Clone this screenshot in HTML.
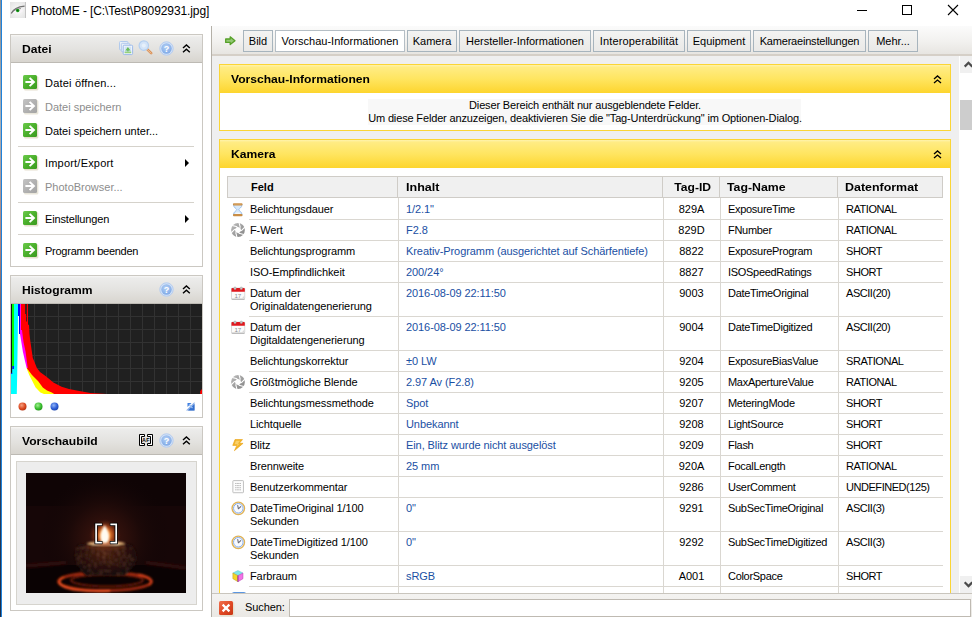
<!DOCTYPE html>
<html lang="de">
<head>
<meta charset="utf-8">
<title>PhotoME - [C:\Test\P8092931.jpg]</title>
<style>
html,body{margin:0;padding:0;}
body{width:972px;height:617px;overflow:hidden;position:relative;background:#fff;font-family:"Liberation Sans",sans-serif;font-size:11px;color:#000;}
*{box-sizing:border-box;}
.abs{position:absolute;}
.t{position:absolute;white-space:nowrap;line-height:13px;}
svg{position:absolute;overflow:visible;}
/* window frame */
#edge0{left:0;top:0;width:1px;height:617px;background:linear-gradient(#8a8f96 0,#a9b0b8 20%,#b08078 40%,#7a6a70 48%,#3a4e6a 60%,#1c2c48 100%);}
#edge1{left:1px;top:0;width:1px;height:617px;background:#1f82da;}
#title{left:31px;top:4px;font-size:12px;line-height:14px;letter-spacing:-0.1px;}
/* sidebar panels */
.sp{position:absolute;left:10px;width:193px;border:1px solid #cbc8c2;background:#fff;}
.sph{position:absolute;left:0;top:0;width:191px;height:28px;background:linear-gradient(#f9f8f6 0,#ececeb 2px,#e3e2df 55%,#d8d5cf 100%);border-bottom:1px solid #bdbab4;}
.sph .t{left:11px;top:7px;font-weight:bold;font-size:11px;line-height:14px;transform:scaleX(1.1);transform-origin:0 50%;}
.mi{position:absolute;left:34px;white-space:nowrap;line-height:13px;}
.mi.dis{color:#8d8d8d;}
.sep{position:absolute;left:7px;width:176px;height:1px;background:#d5d2cb;}
.arr{position:absolute;left:174px;width:0;height:0;border-left:4px solid #000;border-top:4px solid transparent;border-bottom:4px solid transparent;}
.gi{left:12px;}
/* main */
#main{left:211px;top:26px;width:761px;height:591px;background:#efefef;border-left:1px solid #b4b0a8;overflow:hidden;}
#tabbar{left:0;top:0;width:760px;height:30px;background:linear-gradient(#fbfbfb,#f2f1ef 55%,#e7e5e1);border-bottom:2px solid #d5cfc7;}
.tab{position:absolute;top:4px;height:22px;border:1px solid #a7b4bd;background:linear-gradient(#f3f3f2,#eae9e7);font-size:11px;line-height:20px;text-align:center;white-space:nowrap;}
.tab.act{background:#fff;border-color:#b5bec5;}
.yp{position:absolute;left:7px;width:732px;border:1px solid #fbd535;background:#fff;}
.yph{position:absolute;left:0;top:0;width:730px;height:28px;background:linear-gradient(#fff3ac,#ffec84 8%,#ffe560 50%,#fdd52e);}
.yph .t{left:11px;top:7px;font-weight:bold;font-size:11px;line-height:14px;transform:scaleX(1.1);transform-origin:0 50%;}
/* table */
#tbl{left:7px;top:36px;width:717px;height:440px;}
.th{position:absolute;top:0;height:22px;background:#f0f0f0;border:1px solid #cfccc7;border-left:none;font-weight:bold;font-size:11px;line-height:20px;white-space:nowrap;padding-left:7px;}
.th span{display:inline-block;transform:scaleX(1.1);transform-origin:0 50%;}
.row{position:absolute;left:0;width:716px;}
.ic{position:absolute;}
.r1 .c{padding-top:5px;}
.r1 .ic{margin-top:1px;}
.c{position:absolute;top:0;height:100%;border-bottom:1px solid #dad7d1;line-height:13px;padding-top:4px;white-space:nowrap;}
.c1{left:22px;width:149px;padding-left:1px;letter-spacing:-0.1px;}
.c2{left:171px;width:265px;border-left:1px solid #dad7d1;padding-left:7px;color:#1a4fa3;letter-spacing:-0.08px;}
.c3{left:436px;width:57px;border-left:1px solid #dad7d1;text-align:center;padding-right:1px;}
.c4{left:493px;width:118px;border-left:1px solid #dad7d1;padding-left:7px;letter-spacing:-0.3px;}
.c5{left:611px;width:105px;border-left:1px solid #dad7d1;padding-left:7px;letter-spacing:-0.45px;}
#vs{left:747px;top:30px;width:14px;height:537px;background:#fff;}
#bottom{left:0;top:567px;width:760px;height:24px;background:linear-gradient(#f4f3f1,#eae8e4);border-top:1px solid #c9c5bd;}
</style>
</head>
<body>
<div class="abs" id="edge0"></div><div class="abs" id="edge1"></div>
<svg style="left:10px;top:2px" width="16" height="16" viewBox="0 0 16 16"><defs><radialGradient id="gEye" cx=".5" cy=".5" r=".75"><stop offset="0" stop-color="#fbfbfb"/><stop offset="1" stop-color="#e0e0e0"/></radialGradient></defs><rect width="16" height="16" fill="url(#gEye)"/><rect x="15" width="1" height="16" fill="#c4c4c4"/><path d="M2.6 11 C5 8.4 9 7 13.4 8.4 C11 12 6 12.6 2.600 11Z" fill="#f8f4f8"/><path d="M1.200 11.6 C3 7.5 7.500 4.800 14.600 4.200" stroke="#4a4a4a" stroke-width="1.200" fill="none" opacity=".75"/><path d="M2 10.600 C4 8 7 6.600 11 6.600" stroke="#6a6a6a" stroke-width="1" fill="none" opacity=".7"/><circle cx="7.700" cy="8.500" r="1.750" fill="#169c18"/><circle cx="7.700" cy="8.400" r=".700" fill="#0a5c0c"/></svg>
<div class="t" id="title">PhotoME - [C:\Test\P8092931.jpg]</div>
<svg style="left:850px;top:0" width="122" height="22" viewBox="0 0 122 22"><path d="M7 10.500 H17" stroke="#000" stroke-width="1"/><rect x="52.5" y="5.500" width="9" height="9" fill="none" stroke="#000" stroke-width="1"/><path d="M98 5 L108 15 M108 5 L98 15" stroke="#000" stroke-width="1.100"/></svg>

<!-- SIDEBAR -->
<svg width="0" height="0" style="left:0;top:0"><defs>
<linearGradient id="gGreen" x1="0" y1="0" x2="1" y2="1"><stop offset="0" stop-color="#6ccb4c"/><stop offset=".5" stop-color="#4bb02c"/><stop offset="1" stop-color="#3c9a20"/></linearGradient>
<linearGradient id="gGray" x1="0" y1="0" x2="1" y2="1"><stop offset="0" stop-color="#c4c4c4"/><stop offset=".5" stop-color="#b2b2b2"/><stop offset="1" stop-color="#a4a4a4"/></linearGradient>
<radialGradient id="gHelp" cx=".45" cy=".35" r=".7"><stop offset="0" stop-color="#b4cff4"/><stop offset="1" stop-color="#7da8e6"/></radialGradient>
<radialGradient id="gR" cx=".4" cy=".35" r=".7"><stop offset="0" stop-color="#f6a080"/><stop offset=".6" stop-color="#dc4a22"/><stop offset="1" stop-color="#b03010"/></radialGradient>
<radialGradient id="gG" cx=".4" cy=".35" r=".7"><stop offset="0" stop-color="#a0ee90"/><stop offset=".6" stop-color="#3cc030"/><stop offset="1" stop-color="#209018"/></radialGradient>
<radialGradient id="gB" cx=".4" cy=".35" r=".7"><stop offset="0" stop-color="#90b4f6"/><stop offset=".6" stop-color="#3060d8"/><stop offset="1" stop-color="#1840a8"/></radialGradient>
</defs></svg>
<div class="sp" id="p1" style="top:34px;height:233px;">
  <div class="sph"><div class="t">Datei</div>
    <!-- pictures -->
    <svg style="left:108px;top:6px;opacity:.9" width="15" height="15" viewBox="0 0 16 16"><rect x="0.5" y="0.5" width="9" height="9" rx="1" fill="#eaf1fb" stroke="#a8c4ee"/><rect x="2.5" y="2.5" width="9" height="9" rx="1" fill="#eaf1fb" stroke="#a8c4ee"/><rect x="4.5" y="4.5" width="10" height="10" rx="1" fill="#f4f8fe" stroke="#8fb2ea"/><rect x="6" y="6" width="7" height="7" fill="#cfe4f8"/><path d="M9.5 6.3 L12.3 10 H10.2 V11.3 H8.8 V10 H6.7Z" fill="#5cb84a"/><rect x="6" y="11.3" width="7" height="1.7" fill="#8fd070"/></svg>
    <!-- magnifier -->
    <svg style="left:127px;top:5px" width="16" height="16" viewBox="0 0 16 16"><path d="M8.8 8.8 L13.2 13.2" stroke="#d9935a" stroke-width="2.6" stroke-linecap="round"/><path d="M9.2 9.4 L12.9 13.1" stroke="#f0c09a" stroke-width="1" stroke-linecap="round"/><circle cx="5.8" cy="5.6" r="4.7" fill="#d3e4f8" stroke="#b4cff0" stroke-width="1.2"/><circle cx="5.8" cy="5.6" r="2" fill="#e6f0fb"/></svg>
    <!-- help -->
    <svg style="left:147.600px;top:5.600px" width="16" height="16" viewBox="0 0 16 16"><circle cx="7.500" cy="7.500" r="6.700" fill="#d3e2f7" stroke="#b4ccf0" stroke-width="1"/><circle cx="7.500" cy="7.500" r="5.200" fill="url(#gHelp)"/><text x="7.600" y="10.800" text-anchor="middle" font-family="Liberation Sans, sans-serif" font-weight="bold" font-size="9" fill="#fff">?</text></svg>
    <!-- chevrons -->
    <svg style="left:171.300px;top:9px" width="9" height="10" viewBox="0 0 9 10"><path d="M1 4 L4.400 1 L7.800 4 M1 8.200 L4.400 5.200 L7.800 8.200" fill="none" stroke="#000" stroke-width="1.400"/></svg>
  </div>
  <svg class="gi" style="top:40px" width="16" height="16"><rect x="1" y="1" width="14.4" height="14.4" rx="1.5" fill="#e6e0cf"/><rect width="14" height="14" rx="1.5" fill="url(#gGreen)"/><path d="M2.4 7 H10.6 M6.6 2.9 L10.9 7 L6.6 11.1" stroke="#fff" stroke-width="2" fill="none"/></svg>
  <div class="mi" style="top:42px;letter-spacing:0.2px">Datei öffnen...</div>
  <svg class="gi" style="top:64px" width="16" height="16"><rect x="1" y="1" width="14.4" height="14.4" rx="1.5" fill="#e9e6da"/><rect width="14" height="14" rx="1.5" fill="url(#gGray)"/><path d="M2.4 7 H10.6 M6.6 2.9 L10.9 7 L6.6 11.1" stroke="#fff" stroke-width="2" fill="none"/></svg>
  <div class="mi dis" style="top:66px">Datei speichern</div>
  <svg class="gi" style="top:88px" width="16" height="16"><rect x="1" y="1" width="14.4" height="14.4" rx="1.5" fill="#e6e0cf"/><rect width="14" height="14" rx="1.5" fill="url(#gGreen)"/><path d="M2.4 7 H10.6 M6.6 2.9 L10.9 7 L6.6 11.1" stroke="#fff" stroke-width="2" fill="none"/></svg>
  <div class="mi" style="top:90px">Datei speichern unter...</div>
  <div class="sep" style="top:111px"></div>
  <svg class="gi" style="top:120px" width="16" height="16"><rect x="1" y="1" width="14.4" height="14.4" rx="1.5" fill="#e6e0cf"/><rect width="14" height="14" rx="1.5" fill="url(#gGreen)"/><path d="M2.4 7 H10.6 M6.6 2.9 L10.9 7 L6.6 11.1" stroke="#fff" stroke-width="2" fill="none"/></svg>
  <div class="mi" style="top:122px;letter-spacing:0.2px">Import/Export</div><div class="arr" style="top:124px"></div>
  <svg class="gi" style="top:144px" width="16" height="16"><rect x="1" y="1" width="14.4" height="14.4" rx="1.5" fill="#e9e6da"/><rect width="14" height="14" rx="1.5" fill="url(#gGray)"/><path d="M2.4 7 H10.6 M6.6 2.9 L10.9 7 L6.6 11.1" stroke="#fff" stroke-width="2" fill="none"/></svg>
  <div class="mi dis" style="top:146px">PhotoBrowser...</div>
  <div class="sep" style="top:167px"></div>
  <svg class="gi" style="top:176px" width="16" height="16"><rect x="1" y="1" width="14.4" height="14.4" rx="1.5" fill="#e6e0cf"/><rect width="14" height="14" rx="1.5" fill="url(#gGreen)"/><path d="M2.4 7 H10.6 M6.6 2.9 L10.9 7 L6.6 11.1" stroke="#fff" stroke-width="2" fill="none"/></svg>
  <div class="mi" style="top:178px;letter-spacing:-0.15px">Einstellungen</div><div class="arr" style="top:180px"></div>
  <div class="sep" style="top:199px"></div>
  <svg class="gi" style="top:208px" width="16" height="16"><rect x="1" y="1" width="14.4" height="14.4" rx="1.5" fill="#e6e0cf"/><rect width="14" height="14" rx="1.5" fill="url(#gGreen)"/><path d="M2.4 7 H10.6 M6.6 2.9 L10.9 7 L6.6 11.1" stroke="#fff" stroke-width="2" fill="none"/></svg>
  <div class="mi" style="top:210px;letter-spacing:-0.25px">Programm beenden</div>
</div>
<div class="sp" id="p2" style="top:275px;height:143px;">
  <div class="sph"><div class="t">Histogramm</div>
    <svg style="left:147.600px;top:5.600px" width="16" height="16" viewBox="0 0 16 16"><circle cx="7.500" cy="7.500" r="6.700" fill="#d3e2f7" stroke="#b4ccf0" stroke-width="1"/><circle cx="7.500" cy="7.500" r="5.200" fill="url(#gHelp)"/><text x="7.600" y="10.800" text-anchor="middle" font-family="Liberation Sans, sans-serif" font-weight="bold" font-size="9" fill="#fff">?</text></svg>
    <svg style="left:171.300px;top:9px" width="9" height="10" viewBox="0 0 9 10"><path d="M1 4 L4.400 1 L7.800 4 M1 8.200 L4.400 5.200 L7.800 8.200" fill="none" stroke="#000" stroke-width="1.400"/></svg>
  </div>
  <svg style="left:0;top:28px" width="191" height="90" viewBox="0 0 191 90">
    <rect width="191" height="90" fill="#202020"/>
    <g stroke="#323232" stroke-width="1">
      <path d="M23.500 0V90M35.500 0V90M47.500 0V90M59.500 0V90M71.500 0V90M83.500 0V90M95.500 0V90M107.500 0V90M119.500 0V90M131.500 0V90M143.500 0V90M155.500 0V90M167.500 0V90M179.500 0V90"/>
      <path d="M0 12.500H191M0 25.500H191M0 38.500H191M0 51.500H191M0 64.500H191M0 77.500H191"/>
    </g>
    <!-- red -->
    <path d="M9 0 H14.200 V10 H15 V17.500 H15.800 V0 H17 V20.700 H18 L18.500 30 L19.300 37 L21.800 54 L23.500 58 L25.900 64 L29 68 L35.200 72.400 L42.400 78.600 L50.600 82.700 L58 85 L67 86.800 L79.400 88.900 L96 90 H9Z" fill="#ff0000"/>
    <path d="M189.200 90 V87.500 L190.300 85.500 H191 V90Z" fill="#ff0000"/>
    <!-- yellow -->
    <path d="M15 63 L16.500 65 L21 71 L27 77 L31.800 83.500 L36 86.500 L40.800 88.400 L43.200 90 H15Z" fill="#ffff00"/>
    <!-- magenta -->
    <path d="M8.800 0 H10 V26 H11 L12.500 38 L14.600 47.700 L16.700 64 H9Z" fill="#ff00ff"/>
    <!-- black/green/cyan/blue -->
    <rect x="0" y="0" width="1" height="68" fill="#101010"/>
    <rect x="1" y="0" width="2.200" height="90" fill="#00ff00"/>
    <path d="M0 69 H1.300 V62 H3 V90 H0Z" fill="#0020ff"/>
    <path d="M3 0 H7.200 V90 H0 V70 H1.300 V65 H3Z" fill="#00ffff"/>
    <rect x="7" y="0" width="2" height="31" fill="#0000ff"/>
    <!-- white -->
    <path d="M5.800 90 L6.200 70 L6.800 30 L7 12 H8 V30 H9 L10 36 L11.900 47.700 L14 57 L16.100 65.700 L18.500 71.500 L21.300 77 L24.600 83.500 L29.400 88.400 L33 90Z" fill="#ffffff"/>
  </svg>
  <svg style="left:6.600px;top:125.600px" width="50" height="10" viewBox="0 0 50 10"><circle cx="4.5" cy="4.5" r="4" fill="url(#gR)"/><circle cx="20.5" cy="4.5" r="4" fill="url(#gG)"/><circle cx="36.5" cy="4.5" r="4" fill="url(#gB)"/></svg>
  <svg style="left:174.500px;top:125.500px" width="9" height="9" viewBox="0 0 9 9"><path d="M0 8.5 H8.5 V2 L2 8.5Z" fill="#2a62c0"/><path d="M0 8.5 L8.5 0 V8.5Z" fill="#3a78d8" opacity=".6"/><path d="M1.5 1 H5.5 L1.5 5Z" fill="#3f7fe0"/><path d="M3 2.5 L6.5 6" stroke="#9cc0f4" stroke-width="1.2"/></svg>
</div>

<div class="sp" id="p3" style="top:426px;height:185px;">
  <div class="sph"><div class="t">Vorschaubild</div>
    <svg style="left:128px;top:7px" width="14" height="12" viewBox="0 0 14 12"><path d="M0.500 0.500 H5.500 V2.500 H2.500 V9.500 H5.500 V11.500 H0.500Z M13.500 0.500 H8.500 V2.500 H11.500 V9.500 H8.500 V11.500 H13.500Z" fill="#fff" stroke="#000" stroke-width="1"/><text x="7" y="8" text-anchor="middle" font-family="Liberation Sans, sans-serif" font-weight="bold" font-size="5.400" letter-spacing="0.300" fill="#000">AF</text></svg>
    <svg style="left:147.600px;top:5.600px" width="16" height="16" viewBox="0 0 16 16"><circle cx="7.500" cy="7.500" r="6.700" fill="#d3e2f7" stroke="#b4ccf0" stroke-width="1"/><circle cx="7.500" cy="7.500" r="5.200" fill="url(#gHelp)"/><text x="7.600" y="10.800" text-anchor="middle" font-family="Liberation Sans, sans-serif" font-weight="bold" font-size="9" fill="#fff">?</text></svg>
    <svg style="left:171.300px;top:9px" width="9" height="10" viewBox="0 0 9 10"><path d="M1 4 L4.400 1 L7.800 4 M1 8.200 L4.400 5.200 L7.800 8.200" fill="none" stroke="#000" stroke-width="1.400"/></svg>
  </div>
  <div class="abs" style="left:5px;top:34px;width:181px;height:144px;background:#ededed;border:1px solid #d6d4ce;"></div>
  <svg style="left:15px;top:46px;overflow:hidden" width="160" height="120" viewBox="0 0 160 120">
    <defs>
      <radialGradient id="pvGlow" cx="79" cy="66" r="66" gradientUnits="userSpaceOnUse"><stop offset="0" stop-color="#4e1e10"/><stop offset=".22" stop-color="#32110c"/><stop offset=".55" stop-color="#1c0908"/><stop offset="1" stop-color="#100506" stop-opacity="0"/></radialGradient>
      <radialGradient id="pvFlame" cx="79" cy="62" r="16" gradientUnits="userSpaceOnUse"><stop offset="0" stop-color="#ffe2b0"/><stop offset=".28" stop-color="#f08a34"/><stop offset=".55" stop-color="#b04818" stop-opacity=".8"/><stop offset="1" stop-color="#4a180c" stop-opacity="0"/></radialGradient>
      <radialGradient id="pvBody" cx="79" cy="80" r="36" gradientUnits="userSpaceOnUse" gradientTransform="translate(0 32) scale(1 .6)"><stop offset="0" stop-color="#4a2012"/><stop offset=".5" stop-color="#2e130c"/><stop offset="1" stop-color="#160807"/></radialGradient>
      <filter id="pvBlur" x="-20%" y="-20%" width="140%" height="140%"><feGaussianBlur stdDeviation="1.5"/></filter>
      <filter id="pvBlur2" x="-20%" y="-20%" width="140%" height="140%"><feGaussianBlur stdDeviation="0.8"/></filter>
      <filter id="pvTex" x="0" y="0" width="100%" height="100%"><feTurbulence type="fractalNoise" baseFrequency="0.35" numOctaves="2" seed="7" result="n"/><feColorMatrix in="n" type="matrix" values="0 0 0 0 0.36  0 0 0 0 0.15  0 0 0 0 0.09  0 0 0 1.8 -0.95"/><feComposite in2="SourceGraphic" operator="in"/><feGaussianBlur stdDeviation="0.5"/></filter>
    </defs>
    <rect width="160" height="120" fill="#0f0405"/>
    <rect y="33" width="160" height="60" fill="#160607"/>
    <rect width="160" height="120" fill="url(#pvGlow)"/>
    <path d="M0 97 L36 92 H122 L160 98 V120 H0Z" fill="#0a0203"/>
    <path d="M0 93 L40 89.500 M120 89.500 L160 95" stroke="#34100d" stroke-width="3" filter="url(#pvBlur)"/>
    <!-- reflection rings -->
    <g filter="url(#pvBlur2)" fill="none">
      <ellipse cx="79" cy="108.500" rx="46.500" ry="9" stroke="#a42a0e" stroke-width="2.800"/>
      <ellipse cx="81" cy="107.300" rx="36" ry="6" stroke="#7a1f0b" stroke-width="1.800"/>
      <path d="M33 109 C35 117 60 119 84 118" stroke="#ff5a28" stroke-width="1.800"/>
      <path d="M38 104 C34 106 33 108 34 110" stroke="#e2481c" stroke-width="2"/>
      <path d="M112 101.500 C124 103.500 128 108 123 112" stroke="#d8421a" stroke-width="2"/>
    </g>
    <!-- holder -->
    <g filter="url(#pvBlur2)">
      <path d="M52 72 C49 78 47.500 82 49.500 88 C51.500 94 56 99 60 103 H98 C104 99 108.500 93 110.500 87 C111.500 81 109 76 106 72 C98 68.500 60 68.500 52 72Z" fill="url(#pvBody)"/>
      <path d="M52 72 C49 78 47.500 82 49.500 88 C51.500 94 56 99 60 103 H98 C104 99 108.500 93 110.500 87 C111.500 81 109 76 106 72 C98 68.500 60 68.500 52 72Z" fill="#fff" filter="url(#pvTex)"/>
      <path d="M60 73.500 C70 76.500 88 76.500 98 73.500" stroke="#6a3018" stroke-width="1.600" fill="none"/>
      <ellipse cx="80" cy="70.300" rx="18.500" ry="2" fill="#f8c080"/>
      <ellipse cx="80" cy="70.200" rx="13" ry="1.400" fill="#fff6e2"/>
    </g>
    <circle cx="79" cy="62" r="16" fill="url(#pvFlame)"/>
    <path d="M78.500 52 C82 57 84 62 82.600 67.500 C81.500 71 76 71 75 67.500 C73.500 62 75.500 57 78.500 52Z" fill="#fffaf0" filter="url(#pvBlur2)"/>
    <!-- AF brackets -->
    <path d="M76.500 51.300 H70.100 V69.700 H76.500 M83.800 51.300 H90.200 V69.700 H83.800" fill="none" stroke="#000" stroke-width="3.200"/>
    <path d="M75.900 51.300 H70.100 V69.700 H75.900 M84.400 51.300 H90.200 V69.700 H84.400" fill="none" stroke="#fff" stroke-width="1.700"/>
  </svg>
</div>


<!-- MAIN -->
<div class="abs" id="main">
  <div class="abs" id="tabbar">
    <svg style="left:13px;top:10px" width="11" height="10" viewBox="0 0 11 10"><path d="M0.700 3 H5.200 V0.800 L10 4.700 L5.200 8.600 V6.400 H0.700Z" fill="#93c873" stroke="#56a028" stroke-width="1.300" stroke-linejoin="round"/></svg>
    <div class="tab" style="left:31px;width:30px">Bild</div>
    <div class="tab act" style="left:63px;width:130px">Vorschau-Informationen</div>
    <div class="tab" style="left:195px;width:50px">Kamera</div>
    <div class="tab" style="left:247px;width:132px">Hersteller-Informationen</div>
    <div class="tab" style="left:381px;width:92px;letter-spacing:0.15px">Interoperabilität</div>
    <div class="tab" style="left:475px;width:64px">Equipment</div>
    <div class="tab" style="left:541px;width:113px;letter-spacing:-0.2px">Kameraeinstellungen</div>
    <div class="tab" style="left:656px;width:50px">Mehr...</div>
  </div>
  <div class="yp" style="top:38px;height:67px;">
    <div class="yph"><div class="t">Vorschau-Informationen</div><svg style="left:713px;top:10px" width="9" height="9" viewBox="0 0 9 9"><path d="M1 4 L4.500 0.900 L8 4 M1 8.100 L4.500 5 L8 8.100" fill="none" stroke="#000" stroke-width="1.300"/></svg></div>
    <div class="abs" style="left:148px;top:34px;width:433px;height:26px;background:#f8f8f8"></div>
    <div class="t" style="left:0;width:730px;top:34px;text-align:center;letter-spacing:-0.15px">Dieser Bereich enthält nur ausgeblendete Felder.</div>
    <div class="t" style="left:0;width:730px;top:47px;text-align:center;letter-spacing:-0.15px">Um diese Felder anzuzeigen, deaktivieren Sie die "Tag-Unterdrückung" im Optionen-Dialog.</div>
  </div>
  <div class="yp" style="top:113px;height:500px;">
    <div class="yph"><div class="t">Kamera</div><svg style="left:713px;top:10px" width="9" height="9" viewBox="0 0 9 9"><path d="M1 4 L4.500 0.900 L8 4 M1 8.100 L4.500 5 L8 8.100" fill="none" stroke="#000" stroke-width="1.300"/></svg></div>
    <div class="abs" id="tbl">
      <div class="th" style="left:0;width:171px;border-left:1px solid #cfccc7;padding-left:23px"><span style="transform:scaleX(1)">Feld</span></div>
      <div class="th" style="left:171px;width:265px;padding-left:8px"><span style="transform:scaleX(1.14)">Inhalt</span></div>
      <div class="th" style="left:436px;width:57px;padding-left:3px;text-align:center"><span style="transform-origin:50% 50%">Tag-ID</span></div>
      <div class="th" style="left:493px;width:118px"><span style="transform:scaleX(1.12)">Tag-Name</span></div>
      <div class="th" style="left:611px;width:105px"><span style="transform:scaleX(1.13)">Datenformat</span></div>
<div class="row r1" style="top:22px;height:22px"><svg class="ic" style="left:4.500px;top:3.500px" width="11.500" height="13.400" viewBox="0 0 12 14"><path d="M1.5 1.5 H10.5 C10.5 5 7 6 7 7 C7 8 10.5 9 10.5 12.5 H1.5 C1.5 9 5 8 5 7 C5 6 1.5 5 1.5 1.5Z" fill="#d6e8fa" stroke="#9cc0ea" stroke-width="1"/><path d="M3 11.5 C4 9.5 8 9.5 9 11.5Z" fill="#f4f8fc"/><rect x="1" y="0.3" width="10" height="2.2" rx="1" fill="#c98d45"/><rect x="1" y="11.6" width="10" height="2.2" rx="1" fill="#c98d45"/><rect x="2" y="0.6" width="8" height="0.8" fill="#e2b77e"/></svg><div class="c c1">Belichtungsdauer</div><div class="c c2">1/2.1"</div><div class="c c3">829A</div><div class="c c4">ExposureTime</div><div class="c c5">RATIONAL</div></div>
<div class="row" style="top:44px;height:21px"><svg class="ic" style="left:4px;top:3px" width="14" height="14" viewBox="0 0 14 14"><defs><linearGradient id="gAp" x1="0" y1="0" x2="1" y2="1"><stop offset="0" stop-color="#bdbdbd"/><stop offset="1" stop-color="#838383"/></linearGradient></defs><circle cx="7" cy="7" r="6.900" fill="url(#gAp)"/><path d="M10.19 7.85 L7.85 10.19 L4.67 9.33 L3.81 6.15 L6.15 3.81 L9.33 4.67Z" fill="#fff"/><path d="M10.19 7.85 L13.82 4.23 M7.85 10.19 L12.81 11.52 M4.67 9.33 L5.99 14.29 M3.81 6.15 L0.18 9.77 M6.15 3.81 L1.19 2.48 M9.33 4.67 L8.01 -0.29" stroke="#fff" stroke-width="1.100" fill="none"/></svg><div class="c c1">F-Wert</div><div class="c c2">F2.8</div><div class="c c3">829D</div><div class="c c4">FNumber</div><div class="c c5">RATIONAL</div></div>
<div class="row" style="top:65px;height:21px"><div class="c c1">Belichtungsprogramm</div><div class="c c2">Kreativ-Programm (ausgerichtet auf Schärfentiefe)</div><div class="c c3">8822</div><div class="c c4">ExposureProgram</div><div class="c c5">SHORT</div></div>
<div class="row" style="top:86px;height:21px"><div class="c c1">ISO-Empfindlichkeit</div><div class="c c2">200/24°</div><div class="c c3">8827</div><div class="c c4">ISOSpeedRatings</div><div class="c c5">SHORT</div></div>
<div class="row" style="top:107px;height:34px"><svg class="ic" style="left:4px;top:4px" width="14.300" height="13.400" viewBox="0 0 15 14"><rect x="0.5" y="1" width="14" height="12.5" rx="1" fill="#b9b9b9"/><rect x="0.5" y="1" width="14" height="11.3" rx="1" fill="#fbfbfb" stroke="#d0d0d0" stroke-width="0.6"/><path d="M0.5 5 V2 Q0.5 1 1.5 1 H13.5 Q14.5 1 14.5 2 V5Z" fill="#e0181e"/><rect x="3" y="0" width="2.4" height="2.6" rx="0.8" fill="#c9c9c9" stroke="#9a9a9a" stroke-width="0.4"/><rect x="9.6" y="0" width="2.4" height="2.6" rx="0.8" fill="#c9c9c9" stroke="#9a9a9a" stroke-width="0.4"/><text x="7.2" y="11.3" font-family="Liberation Sans, sans-serif" font-size="6.5" fill="#8d8d8d" text-anchor="middle">17</text><path d="M11.3 12 L14 9 V12Z" fill="#d9d9d9"/></svg><div class="c c1">Datum der<br>Originaldatengenerierung</div><div class="c c2">2016-08-09 22:11:50</div><div class="c c3">9003</div><div class="c c4">DateTimeOriginal</div><div class="c c5">ASCII(20)</div></div>
<div class="row" style="top:141px;height:34px"><svg class="ic" style="left:4px;top:4px" width="14.300" height="13.400" viewBox="0 0 15 14"><rect x="0.5" y="1" width="14" height="12.5" rx="1" fill="#b9b9b9"/><rect x="0.5" y="1" width="14" height="11.3" rx="1" fill="#fbfbfb" stroke="#d0d0d0" stroke-width="0.6"/><path d="M0.5 5 V2 Q0.5 1 1.5 1 H13.5 Q14.5 1 14.5 2 V5Z" fill="#e0181e"/><rect x="3" y="0" width="2.4" height="2.6" rx="0.8" fill="#c9c9c9" stroke="#9a9a9a" stroke-width="0.4"/><rect x="9.6" y="0" width="2.4" height="2.6" rx="0.8" fill="#c9c9c9" stroke="#9a9a9a" stroke-width="0.4"/><text x="7.2" y="11.3" font-family="Liberation Sans, sans-serif" font-size="6.5" fill="#8d8d8d" text-anchor="middle">17</text><path d="M11.3 12 L14 9 V12Z" fill="#d9d9d9"/></svg><div class="c c1">Datum der<br>Digitaldatengenerierung</div><div class="c c2">2016-08-09 22:11:50</div><div class="c c3">9004</div><div class="c c4">DateTimeDigitized</div><div class="c c5">ASCII(20)</div></div>
<div class="row" style="top:175px;height:21px"><div class="c c1">Belichtungskorrektur</div><div class="c c2">±0 LW</div><div class="c c3">9204</div><div class="c c4">ExposureBiasValue</div><div class="c c5">SRATIONAL</div></div>
<div class="row" style="top:196px;height:21px"><svg class="ic" style="left:4px;top:3px" width="14" height="14" viewBox="0 0 14 14"><defs><linearGradient id="gAp" x1="0" y1="0" x2="1" y2="1"><stop offset="0" stop-color="#bdbdbd"/><stop offset="1" stop-color="#838383"/></linearGradient></defs><circle cx="7" cy="7" r="6.900" fill="url(#gAp)"/><path d="M10.19 7.85 L7.85 10.19 L4.67 9.33 L3.81 6.15 L6.15 3.81 L9.33 4.67Z" fill="#fff"/><path d="M10.19 7.85 L13.82 4.23 M7.85 10.19 L12.81 11.52 M4.67 9.33 L5.99 14.29 M3.81 6.15 L0.18 9.77 M6.15 3.81 L1.19 2.48 M9.33 4.67 L8.01 -0.29" stroke="#fff" stroke-width="1.100" fill="none"/></svg><div class="c c1">Größtmögliche Blende</div><div class="c c2">2.97 Av (F2.8)</div><div class="c c3">9205</div><div class="c c4">MaxApertureValue</div><div class="c c5">RATIONAL</div></div>
<div class="row" style="top:217px;height:21px"><div class="c c1">Belichtungsmessmethode</div><div class="c c2">Spot</div><div class="c c3">9207</div><div class="c c4">MeteringMode</div><div class="c c5">SHORT</div></div>
<div class="row" style="top:238px;height:21px"><div class="c c1">Lichtquelle</div><div class="c c2">Unbekannt</div><div class="c c3">9208</div><div class="c c4">LightSource</div><div class="c c5">SHORT</div></div>
<div class="row" style="top:259px;height:21px"><svg class="ic" style="left:4.800px;top:3.800px" width="12.200" height="12.200" viewBox="0 0 13 13"><path d="M3.2 0.6 H11.2 L7.8 4.6 H11.8 L2.6 12.4 L5.2 6.8 H0.8Z" fill="#f3b52a" stroke="#e9a417" stroke-width="0.7" stroke-linejoin="round"/><path d="M4.2 1.8 H8.6 L6.2 5 H8 L4.4 8.6 L6 5.6 H2.8Z" fill="#fbd77a" opacity=".8"/></svg><div class="c c1">Blitz</div><div class="c c2">Ein, Blitz wurde nicht ausgelöst</div><div class="c c3">9209</div><div class="c c4">Flash</div><div class="c c5">SHORT</div></div>
<div class="row" style="top:280px;height:21px"><div class="c c1">Brennweite</div><div class="c c2">25 mm</div><div class="c c3">920A</div><div class="c c4">FocalLength</div><div class="c c5">RATIONAL</div></div>
<div class="row" style="top:301px;height:21px"><svg class="ic" style="left:5px;top:3px" width="12.500" height="13.500" viewBox="0 0 13 14"><rect x="0.9" y="0.6" width="11" height="12.6" rx="0.6" fill="#fdfdfd" stroke="#bdbdbd" stroke-width="1"/><path d="M3.3 3.600 H9.6 M3.300 5.800 H9.600 M3.300 8 H9.600 M3.300 10.200 H9.600" stroke="#a8a8a8" stroke-width="0.9" stroke-dasharray="1.2 0.4"/></svg><div class="c c1">Benutzerkommentar</div><div class="c c2"></div><div class="c c3">9286</div><div class="c c4">UserComment</div><div class="c c5">UNDEFINED(125)</div></div>
<div class="row" style="top:322px;height:34px"><svg class="ic" style="left:3.700px;top:2.800px" width="14.600" height="14.600" viewBox="0 0 15 15"><circle cx="7.5" cy="7.5" r="6.4" fill="#fff" stroke="#dfb256" stroke-width="1.4"/><circle cx="7.5" cy="7.5" r="4.9" fill="#f7faff" stroke="#7ea8ea" stroke-width="1"/><path d="M6.9 4.6 L7.6 8 L10 5.8" fill="none" stroke="#6b6b78" stroke-width="1.1" stroke-linecap="round" stroke-linejoin="round"/></svg><div class="c c1">DateTimeOriginal 1/100<br>Sekunden</div><div class="c c2">0"</div><div class="c c3">9291</div><div class="c c4">SubSecTimeOriginal</div><div class="c c5">ASCII(3)</div></div>
<div class="row" style="top:356px;height:34px"><svg class="ic" style="left:3.700px;top:2.800px" width="14.600" height="14.600" viewBox="0 0 15 15"><circle cx="7.5" cy="7.5" r="6.4" fill="#fff" stroke="#dfb256" stroke-width="1.4"/><circle cx="7.5" cy="7.5" r="4.9" fill="#f7faff" stroke="#7ea8ea" stroke-width="1"/><path d="M6.9 4.6 L7.6 8 L10 5.8" fill="none" stroke="#6b6b78" stroke-width="1.1" stroke-linecap="round" stroke-linejoin="round"/></svg><div class="c c1">DateTimeDigitized 1/100<br>Sekunden</div><div class="c c2">0"</div><div class="c c3">9292</div><div class="c c4">SubSecTimeDigitized</div><div class="c c5">ASCII(3)</div></div>
<div class="row" style="top:390px;height:21px"><svg class="ic" style="left:4.500px;top:4.300px" width="12.300" height="12.300" viewBox="0 0 13 13"><path d="M6.3 0.6 L11.6 3.2 L6.3 6 L0.9 3.2Z" fill="#7fe8ea" stroke="#5cc4cc" stroke-width="0.5"/><path d="M0.9 3.2 L6.3 6 V12.4 L0.9 9.2Z" fill="#f5d628" stroke="#b59a18" stroke-width="0.5"/><path d="M11.6 3.2 L6.3 6 V12.4 L11.6 9.2Z" fill="#f274e6" stroke="#b23ab0" stroke-width="0.5"/><path d="M6.3 6 V12.4" stroke="#8a2a9a" stroke-width="0.8"/></svg><div class="c c1">Farbraum</div><div class="c c2">sRGB</div><div class="c c3">A001</div><div class="c c4">ColorSpace</div><div class="c c5">SHORT</div></div>
<div class="row" style="top:411px;height:21px"><svg class="ic" style="left:4.500px;top:4.500px" width="14" height="12" viewBox="0 0 14 12"><rect x="0.5" y="0.5" width="13" height="10" rx="1" fill="#9cc3f2" stroke="#5c96e0"/></svg><div class="c c1">Bildbreite</div><div class="c c2">1600 Pixel</div><div class="c c3">A002</div><div class="c c4">ExifImageWidth</div><div class="c c5">LONG</div></div>
    </div>
  </div>
  <div class="abs" id="vs">
    <div class="abs" style="left:1px;top:0;width:13px;height:17px;background:#f0f0f0"></div>
    <svg style="left:4.500px;top:5px" width="9" height="7" viewBox="0 0 9 7"><path d="M0.700 5.600 L4.500 1.800 L8.300 5.600" fill="none" stroke="#4a4a4a" stroke-width="2.200"/></svg>
    <div class="abs" style="left:1px;top:44px;width:13px;height:30px;background:#cdcdcd"></div>
    <div class="abs" style="left:1px;top:520px;width:13px;height:17px;background:#f0f0f0"></div>
    <svg style="left:4.500px;top:525px" width="9" height="7" viewBox="0 0 9 7"><path d="M0.700 1.300 L4.500 5.100 L8.300 1.300" fill="none" stroke="#4a4a4a" stroke-width="2.200"/></svg>
  </div>
  <div class="abs" id="bottom">
    <svg style="left:7px;top:7px" width="16" height="16"><defs><linearGradient id="gRed" x1="0" y1="0" x2="1" y2="1"><stop offset="0" stop-color="#f0714e"/><stop offset=".5" stop-color="#e14a26"/><stop offset="1" stop-color="#c83614"/></linearGradient></defs><rect x="1" y="1" width="14.400" height="14.400" rx="1.500" fill="#e6e0cf"/><rect width="14" height="14" rx="1.500" fill="url(#gRed)"/><path d="M3.600 3.600 L10.400 10.400 M10.400 3.600 L3.600 10.400" stroke="#fff" stroke-width="2.200"/></svg>
    <div class="t" style="left:33px;top:7px;letter-spacing:-0.1px">Suchen:</div>
    <div class="abs" style="left:77px;top:5px;width:682px;height:18px;background:#fff;border:1px solid #bfbab2;"></div>
  </div>
</div>

</body>
</html>
